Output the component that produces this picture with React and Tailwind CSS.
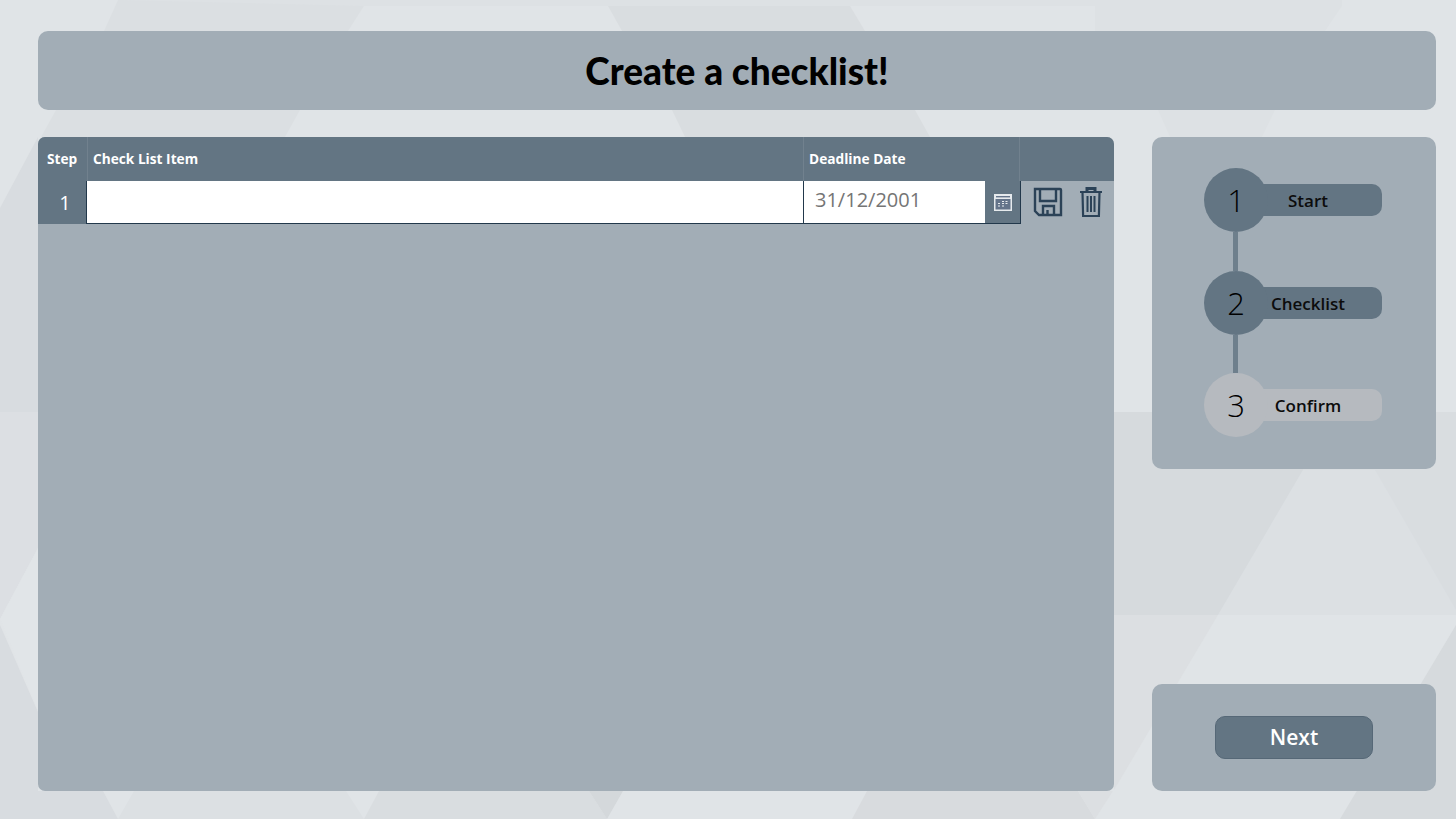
import React from 'react';

const steps = [
  { n: 1, label: 'Start', done: true },
  { n: 2, label: 'Checklist', done: true },
  { n: 3, label: 'Confirm', done: false },
];

// low-contrast triangle pattern behind the page
const Backdrop = () => (
  <svg className="absolute inset-0 w-full h-full" viewBox="0 0 1456 819" preserveAspectRatio="none">
    <rect width="1456" height="819" fill="#e0e4e7" />
    {/* top band */}
    <polygon points="118,0 1342,0 1342,6 118,6" fill="#dde1e4" />
    <polygon points="118,0 364,6 348,31 104,31" fill="#dbdfe2" />
    <polygon points="608,6 850,6 865,31 622,31" fill="#d9dde0" />
    <polygon points="1095,6 1342,6 1325,31 1095,31" fill="#dde1e4" />
    <polygon points="56,110 300,110 285,137 41,137" fill="#dbdfe2" />
    <polygon points="672,110 915,110 930,137 685,137" fill="#d9dde0" />
    <polygon points="1158,110 1275,110 1262,137 1170,137" fill="#dde1e4" />
    {/* left strip */}
    <polygon points="38,137 0,208 0,412 38,412" fill="#d8dce0" />
    <polygon points="0,412 38,412 38,548 0,619" fill="#dcdfe3" />
    <polygon points="38,548 0,619 38,712" fill="#e1e5e8" />
    <polygon points="0,625 38,712 38,819 0,819" fill="#d8dce0" />
    {/* right side */}
    <polygon points="1114,412 1456,412 1456,615 1114,615" fill="#d9dde0" />
    <polygon points="1114,412 1303,412 1303,470 1218,615 1114,615" fill="#d6dadd" />
    <polygon points="1303,470 1375,470 1456,610 1456,615 1218,615" fill="#dce0e3" />
    <polygon points="1114,615 1218,615 1114,790" fill="#dcdfe2" />
    <polygon points="1456,625 1456,819 1340,819" fill="#d6dadd" />
    {/* bottom band */}
    <polygon points="0,791 103,791 118,819 0,819" fill="#d8dce0" />
    <polygon points="134,791 346,791 364,819 118,819" fill="#dce0e3" />
    <polygon points="379,791 589,791 607,819 364,819" fill="#d9dde0" />
    <polygon points="589,791 623,791 607,819" fill="#d4d8db" />
    <polygon points="867,791 1078,791 1095,819 852,819" fill="#d8dbde" />
    <polygon points="1078,791 1113,791 1095,819" fill="#dcdfe2" />
  </svg>
);

const SaveIcon = () => (
  <svg width="30" height="30" viewBox="0 0 30 30" fill="none" stroke="#2b4257" strokeWidth="2.4">
    <path d="M2 2h25a1 1 0 0 1 1 1v25H6l-4-4z" />
    <path d="M7 2v12h16V2" />
    <path d="M10 28v-9h11v9" />
    <path d="M14.5 23v5" />
  </svg>
);

const TrashIcon = () => (
  <svg width="24" height="30" viewBox="0 0 24 30" fill="none" stroke="#2b4257" strokeWidth="2.2">
    <path d="M1 5h22" strokeWidth="2" />
    <path d="M8 4V1.5h8V4" strokeWidth="3" />
    <path d="M3.5 5l.6 24h15.8l.6-24" />
    <path d="M8.5 9v16M12 9v16M15.5 9v16" strokeWidth="2" />
  </svg>
);

const CalendarIcon = () => (
  <svg width="18" height="17" viewBox="0 0 18 17" fill="none">
    <rect x="0.5" y="0.5" width="17" height="16" fill="#e6eaed" stroke="#e6eaed" />
    <rect x="1.5" y="5" width="15" height="10.5" fill="#64748a" />
    <rect x="2" y="2" width="14" height="1.4" fill="#64748a" />
    <path d="M4 9.5h2M8 7.5h2M8 9.5h2M8 12h2M11.5 7.5h2M11.5 9.5h2M4 12h2" stroke="#e6eaed" strokeWidth="1.2" />
  </svg>
);

const Step = ({ n, label, done }) => (
  <div className="flex items-center">
    <div className={`w-16 h-16 rounded-full flex items-center justify-center text-[31px] font-light text-black z-10 ${done ? 'bg-[#637583]' : 'bg-[#b6babf]'}`}>
      {n}
    </div>
    <div className={`w-[148px] h-8 -ml-[34px] rounded-r-[10px] flex items-center justify-center text-[17px] font-semibold text-[#0c0c0c] relative ${done ? 'bg-[#637583]' : 'bg-[#b6babf]'}`}>
      <span className="relative z-20 pt-[1px]">{label}</span>
    </div>
  </div>
);

export default function App() {
  return (
    <div className="relative w-screen h-screen overflow-hidden font-['Open_Sans',sans-serif]">
      <Backdrop />
      <div className="relative h-full flex flex-col pt-[31px] pb-[28px] pl-[38px] pr-[20px]">
        <div className="h-[79px] shrink-0 bg-[#a2adb6] rounded-[10px] flex items-center justify-center">
          <h1 className="font-['Lato',sans-serif] font-black text-[37px] text-black">Create a checklist!</h1>
        </div>

        <div className="flex-1 flex gap-[38px] mt-[27px]">
          <div className="w-[1076px] bg-[#a2adb6] rounded-[7px] overflow-hidden">
            <div className="h-[44px] flex bg-[#637583] text-white text-[13.7px] font-bold">
              <div className="w-[50px] pl-[9px] flex items-center border-r border-[#71818e]">Step</div>
              <div className="w-[716px] pl-[5px] flex items-center border-r border-[#71818e]">Check List Item</div>
              <div className="w-[216px] pl-[5px] flex items-center border-r border-[#71818e]">Deadline Date</div>
            </div>
            <div className="h-[43px] flex">
              <div className="w-[48px] bg-[#637583] flex items-center justify-center pl-[6px] text-white text-[20px]">1</div>
              <div className="w-[717px] bg-white border-l border-b border-[#22384b]" />
              <div className="w-[218px] flex border-l border-b border-r border-[#22384b]">
                <div className="w-[181px] bg-white pl-[11px] pb-[5px] flex items-center text-[20px] text-[#757575]">31/12/2001</div>
                <div className="flex-1 bg-[#637583] flex items-center justify-center">
                  <CalendarIcon />
                </div>
              </div>
              <div className="flex items-center pl-[12px] gap-[16px] pb-[1px]">
                <SaveIcon />
                <TrashIcon />
              </div>
            </div>
          </div>

          <div className="w-[284px] flex flex-col justify-between">
            <div className="h-[332px] bg-[#a2adb6] rounded-[10px] pt-[31px] pl-[52px]">
              {steps.map((s, i) => (
                <div key={s.n}>
                  <Step {...s} />
                  {i < steps.length - 1 && (
                    <div className={`w-[5px] ml-[29px] bg-[#6e7f8c] ${i === 0 ? 'h-[39px]' : 'h-[38px]'}`} />
                  )}
                </div>
              ))}
            </div>
            <div className="h-[107px] bg-[#a2adb6] rounded-[10px] flex items-center justify-center">
              <button className="w-[158px] h-[43px] bg-[#637583] border border-[#566877] rounded-[10px] text-white text-[21px] font-semibold">
                Next
              </button>
            </div>
          </div>
        </div>
      </div>
    </div>
  );
}
